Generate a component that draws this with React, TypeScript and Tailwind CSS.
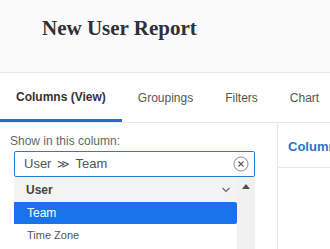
import React from "react";

export default function App() {
  return (
    <div className="w-[330px] h-[249px] overflow-hidden bg-white" style={{ fontFamily: '"Liberation Sans", Arial, sans-serif' }}>
      <div className="h-[73px] bg-[#fafafa] border-b border-[#e6e6e6] pl-[42px] pt-[16px]">
        <h1 className="text-[21px] leading-[24px] font-bold text-[#2f2f35]" style={{ fontFamily: '"Liberation Serif", "Times New Roman", serif' }}>
          New User Report
        </h1>
      </div>
      <div className="h-[50px] border-b border-[#e8e8e8] flex text-[12px] whitespace-nowrap overflow-hidden">
        <div className="h-full px-4 shrink-0 flex items-center border-b-[3px] border-[#1f6fd1] font-bold text-[#333] pt-[2px]">Columns (View)</div>
        <div className="h-full px-4 shrink-0 flex items-center text-[#555]">Groupings</div>
        <div className="h-full px-4 shrink-0 flex items-center text-[#555]">Filters</div>
        <div className="h-full pl-4 shrink-0 flex items-center text-[#555]">Chart</div>
      </div>
      <div className="flex">
        <div className="w-[278px] shrink-0 border-r border-[#e8e8e8] h-[126px]">
          <div className="pl-[10px] pt-[11px] text-[12px] leading-[14px] text-[#666]">Show in this column:</div>
          <div className="ml-[14px] w-[241px] mt-[3px]">
            <div className="h-[26px] border border-[#2a7ad4] rounded-[2px] flex items-center pl-[9px] pr-[5px] text-[13px] text-[#555]">
              <span>User</span>
              <span className="ml-[6px] mr-[5px] text-[12px]">≫</span>
              <span>Team</span>
              <span className="ml-auto">
                <svg width="16" height="16" viewBox="0 0 16 16">
                  <circle cx="8" cy="8" r="7" fill="none" stroke="#8a8a8a" strokeWidth="1" />
                  <path d="M5.5 5.5 L10.5 10.5 M10.5 5.5 L5.5 10.5" stroke="#555" strokeWidth="1.1" />
                </svg>
              </span>
            </div>
            <div className="flex">
              <div className="w-[223px]">
                <div className="h-[25px] bg-[#f3f3f3] flex items-center pl-[12px] pr-[6px] text-[12px] font-bold text-[#444]">
                  <span>User</span>
                  <svg className="ml-auto" width="10" height="8" viewBox="0 0 10 8">
                    <path d="M1.5 2 L5 5.5 L8.5 2" fill="none" stroke="#666" strokeWidth="1.2" />
                  </svg>
                </div>
                <div className="h-[22px] bg-[#1a73e8] rounded-r-[2px] flex items-center pl-[13px] text-[12px] text-white">Team</div>
                <div className="h-[22px] flex items-center pl-[13px] text-[11px] text-[#555]">Time Zone</div>
              </div>
              <div className="w-[18px] bg-[#f1f1f1] flex justify-center pt-[7px] h-[80px]">
                <svg width="8" height="5" viewBox="0 0 8 5">
                  <path d="M0 5 L4 0 L8 5 Z" fill="#505050" />
                </svg>
              </div>
            </div>
          </div>
        </div>
        <div className="flex-1 min-w-0">
          <div className="h-[45px] border-b border-[#e8e8e8] flex items-center pl-[10px] pt-[3px] text-[13px] font-bold text-[#2a73cc] whitespace-nowrap overflow-hidden">
            Columns
          </div>
        </div>
      </div>
    </div>
  );
}
